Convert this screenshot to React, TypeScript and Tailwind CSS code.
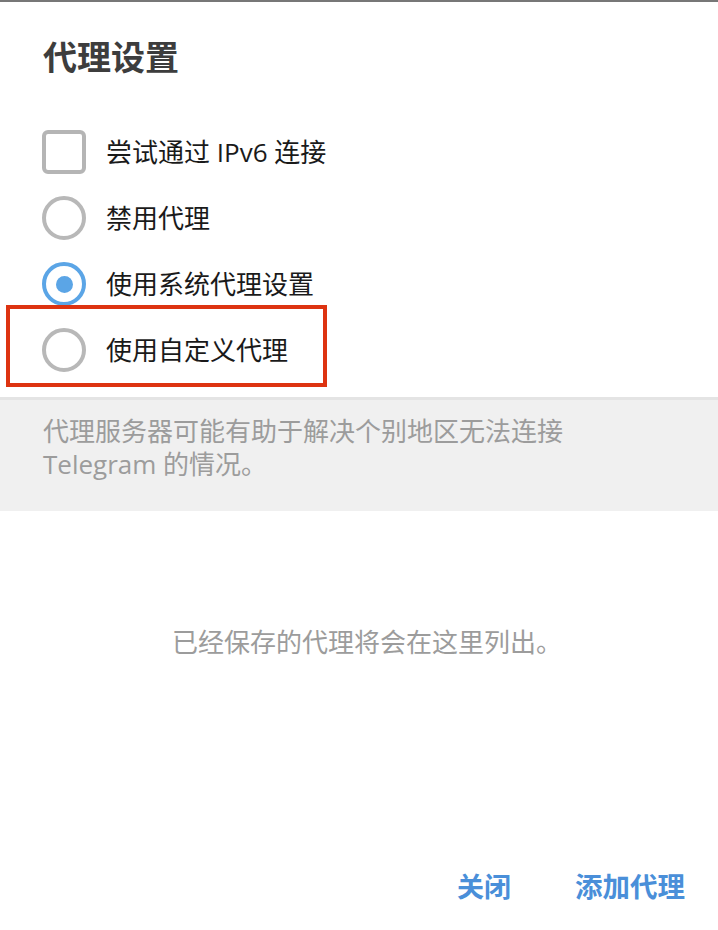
const font = { fontFamily: '"Open Sans", "Noto Sans CJK SC", sans-serif' }

type Option = { label: string; kind: 'checkbox' | 'radio'; checked?: boolean; highlight?: boolean }

const options: Option[] = [
  { label: '尝试通过 IPv6 连接', kind: 'checkbox' },
  { label: '禁用代理', kind: 'radio' },
  { label: '使用系统代理设置', kind: 'radio', checked: true },
  { label: '使用自定义代理', kind: 'radio', highlight: true },
]

const Control = ({ kind, checked }: { kind: Option['kind']; checked?: boolean }) => {
  if (kind === 'checkbox') {
    return <div className="h-[44px] w-[44px] shrink-0 rounded-[6px] border-[4px] border-[#b5b5b5]" />
  }
  return (
    <div
      className={
        checked
          ? 'flex h-[44px] w-[44px] shrink-0 items-center justify-center rounded-full border-[4px] border-[#5ba5e6]'
          : 'flex h-[44px] w-[44px] shrink-0 items-center justify-center rounded-full border-[4px] border-[#b8b8b8]'
      }
    >
      {checked && <div className="h-[17px] w-[17px] rounded-full bg-[#5ba5e6]" />}
    </div>
  )
}

export default function App() {
  return (
    <div className="flex h-[930px] w-[718px] flex-col overflow-hidden bg-white" style={font}>
      <div className="h-[2px] bg-[#777777]" />

      <h1 className="pl-[43px] pt-[33px] text-[34px] font-bold leading-[44px] text-[#3d3d3d]">代理设置</h1>

      <div className="mt-[40px] flex flex-col">
        {options.map((o) => (
          <div key={o.label} className="relative flex h-[66px] items-center gap-[20px] pl-[42px]">
            <Control kind={o.kind} checked={o.checked} />
            <span className="text-[26px] leading-[36px] text-[#1a1a1a]">{o.label}</span>
            {o.highlight && (
              <div className="absolute left-[6px] top-[-12px] h-[82px] w-[321px] border-[4px] border-[#dd3311]" />
            )}
          </div>
        ))}
      </div>

      <div className="mt-[14px] border-t-[3px] border-[#e4e4e4] bg-[#f0f0f0] pb-[30px] pl-[43px] pt-[15px]">
        <p className="text-[26px] leading-[33px] text-[#9c9c9c]">
          代理服务器可能有助于解决个别地区无法连接
          <br />
          Telegram 的情况。
        </p>
      </div>

      <div className="flex h-[262px] items-center justify-center pl-[16px]">
        <p className="text-[26px] leading-[36px] text-[#9c9c9c]">已经保存的代理将会在这里列出。</p>
      </div>

      <div className="flex justify-end gap-[64px] pr-[33px] pt-[96px]">
        <button className="text-[27px] font-bold leading-[36px] text-[#4a8fd9]">关闭</button>
        <button className="text-[27.5px] font-bold leading-[36px] text-[#4a8fd9]">添加代理</button>
      </div>
    </div>
  )
}
